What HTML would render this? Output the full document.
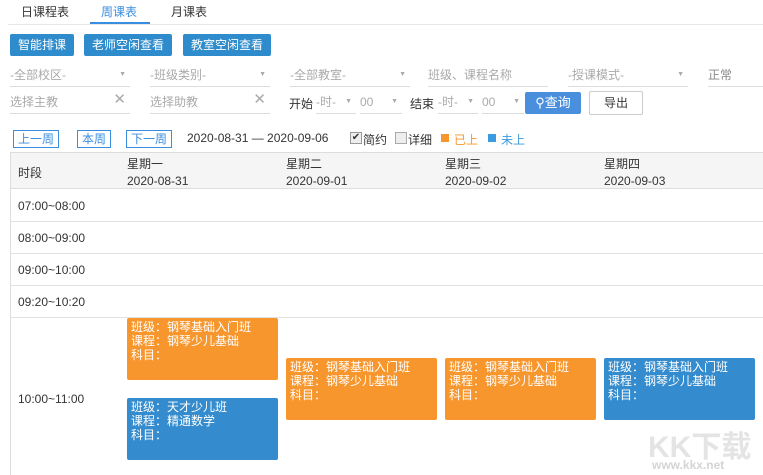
<!DOCTYPE html><html><head><meta charset="utf-8"><style>
*{margin:0;padding:0;box-sizing:border-box}
body{width:763px;height:475px;overflow:hidden;background:#fff;font-family:"Liberation Sans","Noto Sans CJK SC",sans-serif;font-size:12px;color:#333;position:relative}
.a{position:absolute;white-space:nowrap}
.tab{top:3px;font-size:12px;color:#333}
.btn{height:22px;line-height:22px;background:#2e8bcc;color:#fff;border-radius:2px;padding:0 8px;font-size:12px}
.sel{height:22px;border-bottom:1px solid #ddd;color:#aaa;line-height:20px}
.sel .ar{position:absolute;right:4px;top:0;color:#aaa;font-size:7px}
.wk{height:18px;line-height:16px;border:1px solid #3a8ee0;color:#3a8ee0;padding:0 4px;background:#fff}
.hl{left:10px;right:0;height:1px;background:#e2e2e2}
.card{width:151px;height:62px;color:#fff;border-radius:2px;padding:2px 4px;line-height:14px;font-size:12px}
.o{background:#f7962d}.b{background:#348bcd}
</style></head><body>
<div class="a tab" style="left:21px">日课程表</div>
<div class="a tab" style="left:101px;color:#3a8ee0">周课表</div>
<div class="a tab" style="left:171px">月课表</div>
<div class="a" style="left:90px;top:22px;width:60px;height:2px;background:#3a8ee0"></div>
<div class="a" style="left:8px;top:24px;width:755px;height:1px;background:#e8e8e8"></div>
<div class="a btn" style="left:10px;top:34px">智能排课</div>
<div class="a btn" style="left:84px;top:34px">老师空闲查看</div>
<div class="a btn" style="left:183px;top:34px">教室空闲查看</div>
<div class="a sel" style="left:10px;top:65px;width:120px">-全部校区-<span class="ar">▼</span></div>
<div class="a sel" style="left:150px;top:65px;width:120px">-班级类别-<span class="ar">▼</span></div>
<div class="a sel" style="left:290px;top:65px;width:120px">-全部教室-<span class="ar">▼</span></div>
<div class="a sel" style="left:428px;top:65px;width:120px">班级、课程名称</div>
<div class="a sel" style="left:568px;top:65px;width:120px">-授课模式-<span class="ar">▼</span></div>
<div class="a sel" style="left:708px;top:65px;width:60px;color:#888">正常</div>
<div class="a sel" style="left:10px;top:92px;width:120px">选择主教<span class="ar" style="font-size:15px;color:#aaa;top:-2px">✕</span></div>
<div class="a sel" style="left:150px;top:92px;width:120px">选择助教<span class="ar" style="font-size:15px;color:#aaa;top:-2px">✕</span></div>
<div class="a" style="left:289px;top:95px;color:#333">开始</div>
<div class="a sel" style="left:316px;top:92px;width:40px">-时-<span class="ar">▼</span></div>
<div class="a sel" style="left:360px;top:92px;width:42px">00<span class="ar">▼</span></div>
<div class="a" style="left:410px;top:95px;color:#333">结束</div>
<div class="a sel" style="left:438px;top:92px;width:40px">-时-<span class="ar">▼</span></div>
<div class="a sel" style="left:482px;top:92px;width:42px">00<span class="ar">▼</span></div>
<div class="a" style="left:525px;top:92px;width:56px;height:22px;background:#4a8fdd;color:#fff;line-height:22px;text-align:center;border-radius:2px;font-size:13px">⚲查询</div>
<div class="a" style="left:589px;top:91px;width:54px;height:24px;border:1px solid #ccc;line-height:22px;text-align:center;border-radius:2px">导出</div>
<div class="a wk" style="left:13px;top:130px">上一周</div>
<div class="a wk" style="left:77px;top:130px">本周</div>
<div class="a wk" style="left:126px;top:130px">下一周</div>
<div class="a" style="left:187px;top:131px">2020-08-31 — 2020-09-06</div>
<div class="a" style="left:350px;top:132px;width:12px;height:12px;border:1px solid #999;background:#eee;font-size:10px;line-height:10px;text-align:center">✔</div>
<div class="a" style="left:363px;top:131px">简约</div>
<div class="a" style="left:395px;top:132px;width:12px;height:12px;border:1px solid #aaa;background:#eee"></div>
<div class="a" style="left:408px;top:131px">详细</div>
<div class="a" style="left:441px;top:134px;width:8px;height:8px;background:#f7962d"></div>
<div class="a" style="left:454px;top:131px;color:#f7962d">已上</div>
<div class="a" style="left:488px;top:134px;width:8px;height:8px;background:#3a9be0"></div>
<div class="a" style="left:501px;top:131px;color:#3a9be0">未上</div>
<div class="a" style="left:10px;top:152px;width:753px;height:37px;background:#f5f5f5;border-top:1px solid #ddd;border-bottom:1px solid #ddd"></div>
<div class="a" style="left:10px;top:152px;width:1px;height:323px;background:#ddd"></div>
<div class="a" style="left:18px;top:164px">时段</div>
<div class="a" style="left:127px;top:156px;line-height:17px">星期一<br>2020-08-31</div>
<div class="a" style="left:286px;top:156px;line-height:17px">星期二<br>2020-09-01</div>
<div class="a" style="left:445px;top:156px;line-height:17px">星期三<br>2020-09-02</div>
<div class="a" style="left:604px;top:156px;line-height:17px">星期四<br>2020-09-03</div>
<div class="a hl" style="top:221px"></div>
<div class="a hl" style="top:253px"></div>
<div class="a hl" style="top:285px"></div>
<div class="a hl" style="top:317px"></div>
<div class="a" style="left:18px;top:199px">07:00~08:00</div>
<div class="a" style="left:18px;top:231px">08:00~09:00</div>
<div class="a" style="left:18px;top:263px">09:00~10:00</div>
<div class="a" style="left:18px;top:295px">09:20~10:20</div>
<div class="a" style="left:18px;top:392px">10:00~11:00</div>
<div class="a card o" style="left:127px;top:318px">班级：钢琴基础入门班<br>课程：钢琴少儿基础<br>科目：</div>
<div class="a card b" style="left:127px;top:398px">班级：天才少儿班<br>课程：精通数学<br>科目：</div>
<div class="a card o" style="left:286px;top:358px">班级：钢琴基础入门班<br>课程：钢琴少儿基础<br>科目：</div>
<div class="a card o" style="left:445px;top:358px">班级：钢琴基础入门班<br>课程：钢琴少儿基础<br>科目：</div>
<div class="a card b" style="left:604px;top:358px">班级：钢琴基础入门班<br>课程：钢琴少儿基础<br>科目：</div>
<div class="a" style="left:648px;top:422px;font-size:30px;font-weight:bold;color:#e4e4e4">KK下载</div>
<div class="a" style="left:652px;top:458px;font-size:12px;font-weight:bold;color:#d4d4d4">www.kkx.net</div>
</body></html>
